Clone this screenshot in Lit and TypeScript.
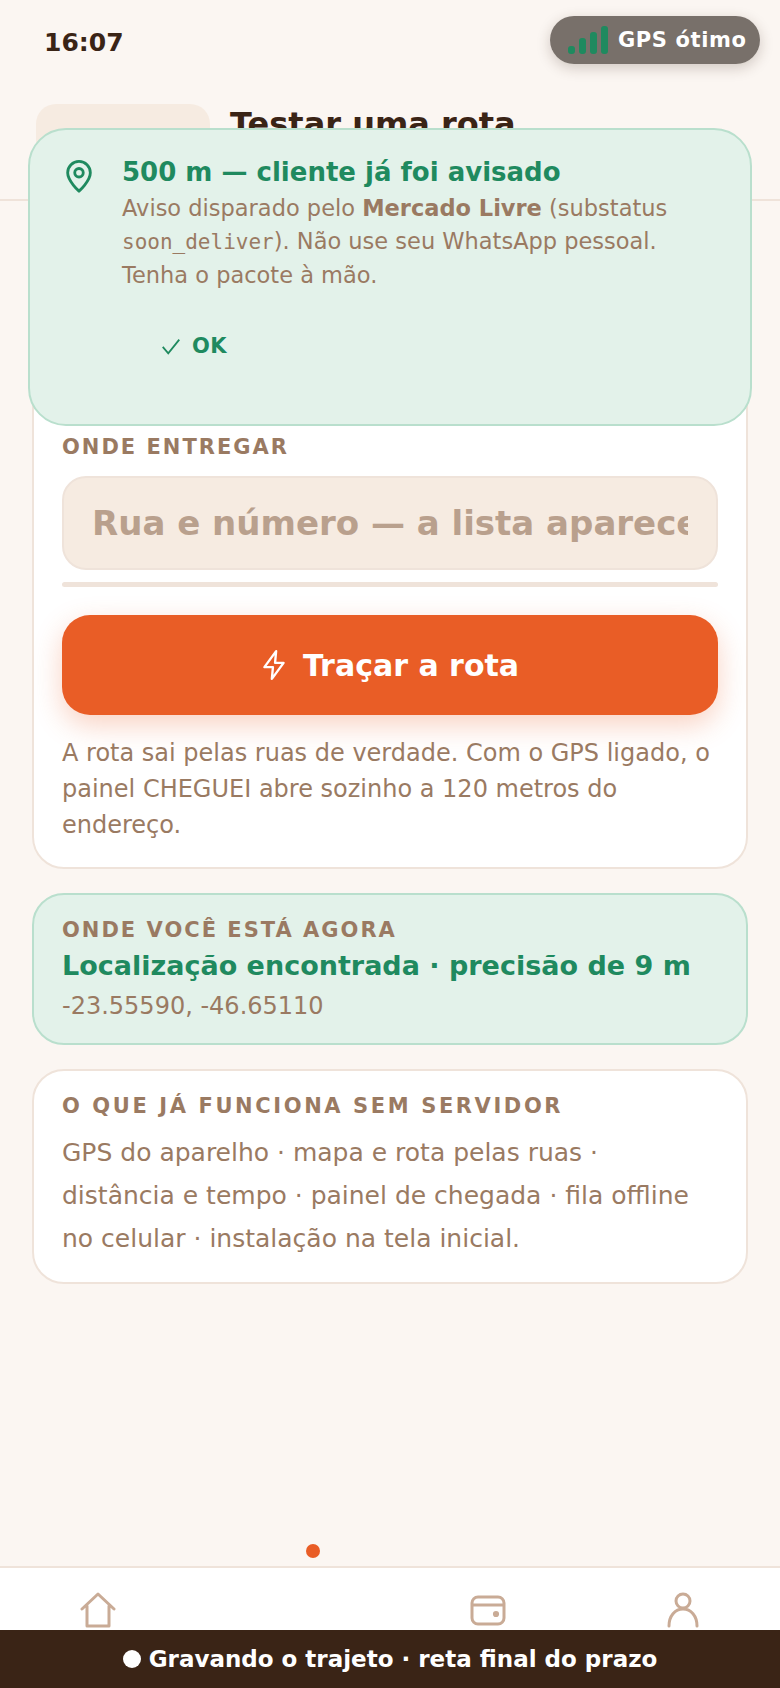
import { LitElement, html, css } from "lit";
import { customElement } from "lit/decorators.js";

@customElement("app-root")
export class AppRoot extends LitElement {
  static styles = css`
    :host {
      display: block;
      width: 780px;
      height: 1688px;
      overflow: hidden;
      position: relative;
      background: #fbf6f2;
      font-family: "DejaVu Sans", sans-serif;
      color: #3a2416;
    }
    * { box-sizing: border-box; }
    .page { display: flex; flex-direction: column; height: 1688px; }
    .status { height: 86px; flex: none; padding: 28px 44px 0; font-size: 25px; font-weight: 700; line-height: 30px; }
    .header {
      height: 115px; flex: none; display: flex; gap: 20px; padding: 18px 36px 0;
      border-bottom: 2px solid #efe3da;
    }
    .back {
      width: 174px; height: 64px; border-radius: 20px; background: #f6ebe1;
      display: flex; align-items: center; justify-content: center; gap: 8px;
      font-size: 20px; font-weight: 700;
    }
    .title { font-size: 32px; font-weight: 700; line-height: 40px; margin: 0; }
    .main { flex: 1; padding: 22px 32px 0; display: flex; flex-direction: column; gap: 24px; min-height: 0; }
    .card { background: #fff; border: 2px solid #efe3da; border-radius: 32px; padding: 28px; }
    .first { height: 646px; display: flex; flex-direction: column; justify-content: flex-end; padding-bottom: 24px; }
    .green { background: #e3f2ea; border-color: #b9dfcd; padding: 22px 28px 22px; }
    .label { font-size: 21px; font-weight: 700; letter-spacing: 2px; color: #9a7a62; line-height: 26px; }
    .input {
      margin-top: 16px; height: 94px; border-radius: 24px; background: #f6ebe1; border: 2px solid #efe3da;
      padding: 0 28px; display: flex; align-items: center;
    }
    .ph { font-size: 34px; font-weight: 700; color: #b9a08d; white-space: nowrap; overflow: hidden; width: 100%; }
    .bar { height: 5px; background: #efe3da; border-radius: 3px; margin-top: 12px; }
    .btn {
      margin-top: 28px; height: 100px; border-radius: 28px; background: #e95d26; color: #fff;
      display: flex; align-items: center; justify-content: center; gap: 16px;
      font-size: 30px; font-weight: 700;
      box-shadow: 0 10px 28px rgba(233, 93, 38, 0.28);
    }
    .note { margin: 20px 0 0; font-size: 24px; line-height: 36px; color: #9a7a62; }
    .loc { font-size: 27px; font-weight: 700; color: #1f8a5f; line-height: 34px; margin-top: 6px; white-space: nowrap; }
    .coords { font-size: 24px; line-height: 30px; color: #9a7a62; margin-top: 8px; }
    .third { padding: 22px 28px; }
    .third .label { letter-spacing: 2.6px; }
    .feat { margin: 12px 0 0; font-size: 25px; line-height: 43px; color: #9a7a62; }
    .nav {
      flex: none; height: 122px; background: #fff; border-top: 2px solid #efe3da;
      display: grid; grid-template-columns: repeat(4, 195px); padding-top: 24px; position: relative;
      justify-items: center; align-content: start;
    }
    .dot { position: absolute; left: 306px; top: -24px; width: 14px; height: 14px; border-radius: 50%; background: #e95d26; }
    .rec {
      position: absolute; left: 0; right: 0; bottom: 0; height: 58px; background: #3a2416; color: #fff;
      display: flex; align-items: center; justify-content: center; gap: 8px; font-size: 23px; font-weight: 700;
    }
    .rec i { width: 18px; height: 18px; border-radius: 50%; background: #fff; display: block; }
    .pill {
      position: absolute; left: 550px; top: 16px; width: 210px; height: 48px; border-radius: 24px;
      background: rgba(58, 48, 42, 0.68); display: flex; align-items: center; gap: 10px; padding-left: 18px;
      box-shadow: 0 4px 14px rgba(58, 36, 22, 0.22);
      color: #fff; font-size: 21px; font-weight: 700; letter-spacing: 0.6px;
    }
    .sig { display: flex; align-items: flex-end; gap: 4px; height: 28px; }
    .sig b { width: 7px; background: #1f8a5f; border-radius: 3px; display: block; }
    .alert {
      position: absolute; left: 28px; top: 128px; width: 724px; height: 298px; border-radius: 38px;
      background: #e3f2ea; border: 2px solid #b9dfcd; padding: 26px 32px; display: flex; gap: 26px;
    }
    .pin { flex: none; margin-top: 4px; }
    .a-title { font-size: 26px; font-weight: 700; color: #1f8a5f; line-height: 32px; }
    .a-text { font-size: 22.5px; line-height: 33px; color: #9a7a62; margin-top: 4px; }
    .a-text code { font-family: "DejaVu Sans Mono", monospace; font-size: 21px; }
    .ok { display: flex; align-items: center; gap: 10px; margin: 42px 0 0 38px; font-size: 21px; font-weight: 700; color: #1f8a5f; letter-spacing: 0.4px; }
  `;

  render() {
    const ic = "#c9ab96";
    return html`
      <div class="page">
        <div class="status">16:07</div>
        <div class="header">
          <div class="back">← Voltar</div>
          <h1 class="title">Testar uma rota</h1>
        </div>
        <div class="main">
          <div class="card first">
            <div class="label">ONDE ENTREGAR</div>
            <div class="input"><div class="ph">Rua e número — a lista aparece enquanto digita</div></div>
            <div class="bar"></div>
            <div class="btn">
              <svg width="26" height="32" viewBox="0 0 24 30" fill="none" stroke="#fff" stroke-width="2.2" stroke-linejoin="round"><path d="M14 2 3 17h8l-1 11 11-15h-8z"/></svg>
              <span>Traçar a rota</span>
            </div>
            <p class="note">A rota sai pelas ruas de verdade. Com o GPS ligado, o painel CHEGUEI abre sozinho a 120 metros do endereço.</p>
          </div>
          <div class="card green">
            <div class="label">ONDE VOCÊ ESTÁ AGORA</div>
            <div class="loc">Localização encontrada · precisão de 9 m</div>
            <div class="coords">-23.55590, -46.65110</div>
          </div>
          <div class="card third">
            <div class="label">O QUE JÁ FUNCIONA SEM SERVIDOR</div>
            <p class="feat">GPS do aparelho · mapa e rota pelas ruas · distância e tempo · painel de chegada · fila offline no celular · instalação na tela inicial.</p>
          </div>
        </div>
        <div class="nav">
          <span class="dot"></span>
          <svg width="36" height="36" viewBox="0 0 36 36" fill="none" stroke="${ic}" stroke-width="3" stroke-linejoin="round" stroke-linecap="round"><path d="M2 17 18 2l16 15M7 14v20h22V14"/></svg>
          <span></span>
          <svg width="36" height="36" viewBox="0 0 36 36" fill="none" stroke="${ic}" stroke-width="3" stroke-linejoin="round"><rect x="2" y="5" width="32" height="27" rx="6"/><path d="M2 13h32"/><circle cx="26" cy="22" r="1.6"/></svg>
          <svg width="36" height="36" viewBox="0 0 36 36" fill="none" stroke="${ic}" stroke-width="3" stroke-linecap="round"><circle cx="18" cy="9" r="7"/><path d="M4 34c0-10 6-17 14-17s14 7 14 17"/></svg>
        </div>
      </div>
      <div class="pill">
        <div class="sig"><b style="height:8px"></b><b style="height:16px"></b><b style="height:22px"></b><b style="height:28px"></b></div>
        <span>GPS ótimo</span>
      </div>
      <div class="alert">
        <svg class="pin" width="34" height="34" viewBox="0 0 24 24" fill="none" stroke="#1f8a5f" stroke-width="2" stroke-linejoin="round"><path d="M12 22s8-7.2 8-13a8 8 0 1 0-16 0c0 5.800 8 13 8 13z"/><circle cx="12" cy="9" r="3"/></svg>
        <div>
          <div class="a-title">500 m — cliente já foi avisado</div>
          <div class="a-text">Aviso disparado pelo <b>Mercado Livre</b> (substatus <code>soon_deliver</code>). Não use seu WhatsApp pessoal. Tenha o pacote à mão.</div>
          <div class="ok">
            <svg width="22" height="22" viewBox="0 0 24 24" fill="none" stroke="#1f8a5f" stroke-width="2"><path d="m3 13 6 7L21 5"/></svg>
            <span>OK</span>
          </div>
        </div>
      </div>
      <div class="rec"><i></i><span>Gravando o trajeto · reta final do prazo</span></div>
    `;
  }
}
